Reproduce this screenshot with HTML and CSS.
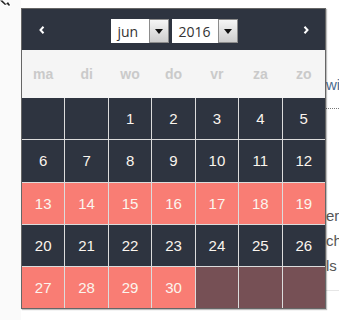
FILE: index.html
```html
<!DOCTYPE html>
<html lang="nl">
<head>
  <meta charset="UTF-8" />
  <meta name="viewport" content="width=device-width, initial-scale=1.0"/>
  <title>Agenda</title>
  <link rel="stylesheet" href="styles.css">
</head>
<body>

  <svg class="cursor" width="12" height="8" viewBox="0 0 12 8">
    <path d="M0 0 L3 0 L6 3 L8 1 L11 5 L9 7 L7 5 L5 6 Z" fill="#fff"/>
    <path d="M0 0.5 L2.5 0.5 L6 4 L8 2 L10 5 L9 6 L7 4 L5 5 Z" fill="#222"/>
  </svg>

  <div class="page">
    <div class="gutter"></div>
    <div class="content">
      <p class="link-line">wi zigen</p>
      <div class="dotted"></div>
      <div class="text-lines">
        <p>er is</p>
        <p>ch de</p>
        <p>ls je</p>
      </div>
      <div class="rule"></div>
    </div>
  </div>

  <div class="datepicker">
    <div class="dp-head">
      <span class="dp-nav">
        <svg width="6" height="8" viewBox="0 0 6 8"><polyline points="4.5,0.8 1.5,4 4.5,7.2" fill="none" stroke="#fff" stroke-width="2"/></svg>
      </span>
      <div class="dp-selects">
        <div class="dp-select month"><span>jun</span><i class="dp-btn"></i></div>
        <div class="dp-select year"><span>2016</span><i class="dp-btn"></i></div>
      </div>
      <span class="dp-nav">
        <svg width="6" height="8" viewBox="0 0 6 8"><polyline points="1.5,0.8 4.5,4 1.5,7.2" fill="none" stroke="#fff" stroke-width="2"/></svg>
      </span>
    </div>

    <div class="dp-weekdays">
      <span>ma</span><span>di</span><span>wo</span><span>do</span><span>vr</span><span>za</span><span>zo</span>
    </div>

    <div class="dp-days">
      <span class="day"></span><span class="day"></span>
      <span class="day">1</span><span class="day">2</span><span class="day">3</span><span class="day">4</span><span class="day">5</span>

      <span class="day">6</span><span class="day">7</span><span class="day">8</span><span class="day">9</span>
      <span class="day">10</span><span class="day">11</span><span class="day">12</span>

      <span class="day busy">13</span><span class="day busy">14</span><span class="day busy">15</span><span class="day busy">16</span>
      <span class="day busy">17</span><span class="day busy">18</span><span class="day busy">19</span>

      <span class="day">20</span><span class="day">21</span><span class="day">22</span><span class="day">23</span>
      <span class="day">24</span><span class="day">25</span><span class="day">26</span>

      <span class="day busy">27</span><span class="day busy">28</span><span class="day busy">29</span><span class="day busy">30</span>
      <span class="day off"></span><span class="day off"></span><span class="day off"></span>
    </div>
  </div>

</body>
</html>
```

FILE: styles.css
```css
:root {
  --dark: #2e3440;
  --busy: #f97d74;
  --off: #765055;
  --line: #dcdcdc;
}

body {
  margin: 0;
  width: 339px;
  height: 320px;
  overflow: hidden;
  position: relative;
  background: #fff;
  font-family: "Liberation Sans", Arial, sans-serif;
}

.cursor {
  position: absolute;
  top: 0;
  left: 0;
  z-index: 5;
}

.page {
  display: flex;
  min-height: 320px;
}

.gutter {
  flex: 0 0 21px;
  background: #fafafa;
}

.content {
  flex: 1;
  min-width: 0;
  overflow: hidden;
  padding-left: 305px;
  white-space: nowrap;
  font-size: 15px;
}

.link-line {
  margin: 75px 0 0;
  line-height: 20px;
  color: #4b6c8f;
}

.dotted {
  margin-top: 13px;
  border-top: 1px dotted #777;
}

.text-lines {
  margin-top: 94px;
  color: #555;
}

.text-lines p {
  margin: 0;
  line-height: 25px;
}

.rule {
  margin-top: 12px;
  border-top: 1px solid #e6e6e6;
}

/* datepicker popup */
.datepicker {
  position: absolute;
  top: 8px;
  left: 21px;
  width: 303px;
  border: 1px solid #666;
  box-shadow: 1px 1px 1px rgba(0, 0, 0, 0.25);
  background: var(--line);
}

.dp-head {
  height: 41px;
  background: var(--dark);
  display: flex;
  align-items: center;
  justify-content: space-between;
  padding: 0 16px 0 17px;
}

.dp-nav {
  display: flex;
  margin-top: 1px;
}

.dp-selects {
  display: flex;
  gap: 3px;
  margin-top: 3px;
}

.dp-select {
  height: 24px;
  background: #fff;
  display: flex;
  align-items: center;
  font-family: "Open Sans", sans-serif;
  font-size: 14px;
  color: #333;
}

.dp-select span {
  flex: 1;
  padding-left: 7px;
}

.dp-select.month {
  width: 58px;
}

.dp-select.year {
  width: 66px;
}

.dp-btn {
  width: 20px;
  height: 24px;
  box-sizing: border-box;
  border: 1px solid #8c8c8c;
  background: linear-gradient(#f6f6f6, #cdcdcd);
  display: flex;
  align-items: center;
  justify-content: center;
}

.dp-btn::after {
  content: "";
  border-left: 4px solid transparent;
  border-right: 4px solid transparent;
  border-top: 5px solid #111;
}

.dp-weekdays {
  height: 48px;
  background: #f5f5f5;
  display: grid;
  grid-template-columns: repeat(7, 1fr);
  gap: 1px;
  align-items: center;
  text-align: center;
  font-size: 14px;
  font-weight: bold;
  color: #cacaca;
}

.dp-days {
  display: grid;
  grid-template-columns: repeat(7, 1fr);
  grid-auto-rows: 41.25px;
  gap: 1px;
}

.day {
  background: var(--dark);
  color: #fbf5ee;
  font-size: 15px;
  display: flex;
  align-items: center;
  justify-content: center;
}

.day.busy {
  background: var(--busy);
}

.day.off {
  background: var(--off);
}
```
